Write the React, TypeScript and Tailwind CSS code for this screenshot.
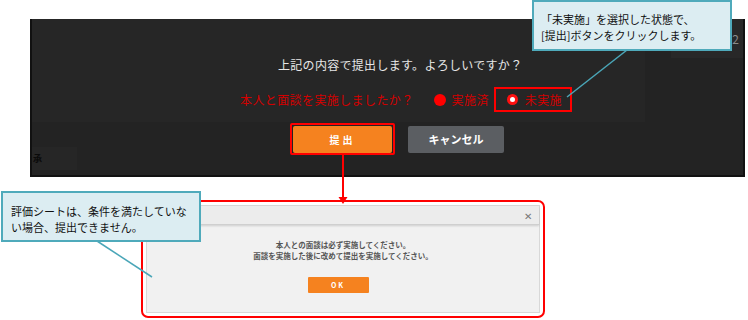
import React from "react";

const jp = { fontFamily: '"Noto Sans CJK JP", "Noto Sans", sans-serif' };

export default function App() {
  return (
    <div className="relative w-[748px] h-[320px] overflow-hidden bg-white" style={jp}>
      {/* dark confirm panel */}
      <div className="ml-[30px] mt-[19px] w-[715px] h-[158px] bg-[#232323] border-l-2 border-r-2 border-b-2 border-[#111] relative flex flex-col">
        <div className="flex">
          <div className="w-[613px] h-[103px] bg-[#262626] flex flex-col">
            <div className="pl-[246px] pt-[38px] text-[12px] leading-[16px] text-[#e6e6e6] tracking-[0.3px]">
              上記の内容で提出します。よろしいですか？
            </div>
            <div className="pl-[208px] mt-[14px] flex items-center text-[12px] leading-[16px] text-[#d40000] tracking-[0.4px]">
              <span>本人と面談を実施しましたか？</span>
              <span className="ml-[20px] w-[12px] h-[12px] rounded-full bg-[#ff0000]" />
              <span className="ml-[6px]">実施済</span>
              <div className="ml-[5px] h-[25px] w-[78px] border-2 border-[#ff0000] flex items-center pl-[11px]">
                <span className="w-[11px] h-[11px] rounded-full bg-[#ff1010] flex items-center justify-center">
                  <span className="w-[5px] h-[5px] rounded-full bg-white" />
                </span>
                <span className="ml-[7px]">未実施</span>
              </div>
            </div>
          </div>
          <div className="flex-1 flex justify-end">
            <div className="w-[72px] h-[39px] bg-[#282828] flex items-center justify-end pr-[4px] text-[12px] text-[#8a8a8a]">2</div>
          </div>
        </div>
        <div className="flex pl-[258px] pt-[1px]">
          <div className="w-[105px] h-[32px] border-2 border-[#ff0000] rounded-[2px] flex items-center justify-center">
            <div className="w-[99px] h-[27px] bg-[#f5821f] rounded-[2px] flex items-center justify-center text-white text-[10px] font-bold tracking-[3px]">
              提出
            </div>
          </div>
          <div className="ml-[13px] mt-[3px] w-[96px] h-[27px] bg-[#5b5e62] rounded-[2px] flex items-center justify-center text-white text-[11px] font-bold">
            キャンセル
          </div>
        </div>
        <div className="absolute left-0 top-[128px] w-[45px] h-[23px] bg-[#262626] text-[9px] text-[#0a0a0a] flex items-center pl-[1px] font-bold">
          承
        </div>
      </div>

      {/* error dialog */}
      <div className="ml-[141px] mt-[23px] w-[404px] h-[118px] border-2 border-[#ff0000] rounded-[7px] p-[3px] bg-white">
        <div className="w-full h-full bg-[#f1f1f1] border border-[#d8d8d8] flex flex-col">
          <div className="h-[19px] bg-[#ececec] border-b border-[#cfcfcf] shadow-[0_1px_2px_rgba(0,0,0,0.15)] flex items-center justify-end pr-[7px] text-[10px] text-[#777]">
            ✕
          </div>
          <div className="flex flex-col items-center pt-[14px] text-[7.5px] leading-[11px] font-bold text-[#555]">
            <div>本人との面談は必ず実施してください。</div>
            <div>面談を実施した後に改めて提出を実施してください。</div>
            <div className="mt-[16px] mr-[10px] w-[61px] h-[16px] bg-[#f5821f] rounded-[1px] flex items-center justify-center text-white text-[7px] font-bold tracking-[2px]">
              OK
            </div>
          </div>
        </div>
      </div>

      {/* annotation lines */}
      <svg className="absolute left-0 top-0" width="748" height="320">
        <line x1="627" y1="50" x2="567" y2="97" stroke="#4aa6b8" strokeWidth="1.5" />
        <line x1="97" y1="241" x2="152" y2="277" stroke="#4aa6b8" strokeWidth="1.5" />
        <line x1="343" y1="154" x2="343" y2="198" stroke="#ff0000" strokeWidth="2" />
        <polygon points="338.5,197 347.5,197 343,204" fill="#ff0000" />
      </svg>

      {/* callout 1 */}
      <div className="absolute left-[532px] top-0 w-[200px] h-[51px] bg-[#dcedf2] border-2 border-[#4faabb] pl-[7px] pt-[9px] text-[11px] leading-[16px] text-[#111]">
        <div>「未実施」を選択した状態で、</div>
        <div>[提出]ボタンをクリックします。</div>
      </div>

      {/* callout 2 */}
      <div className="absolute left-[1px] top-[191px] w-[200px] h-[51px] bg-[#dcedf2] border-2 border-[#4faabb] pl-[8px] pt-[10px] text-[11px] leading-[16px] text-[#111]">
        <div>評価シートは、条件を満たしていな</div>
        <div>い場合、提出できません。</div>
      </div>
    </div>
  );
}
